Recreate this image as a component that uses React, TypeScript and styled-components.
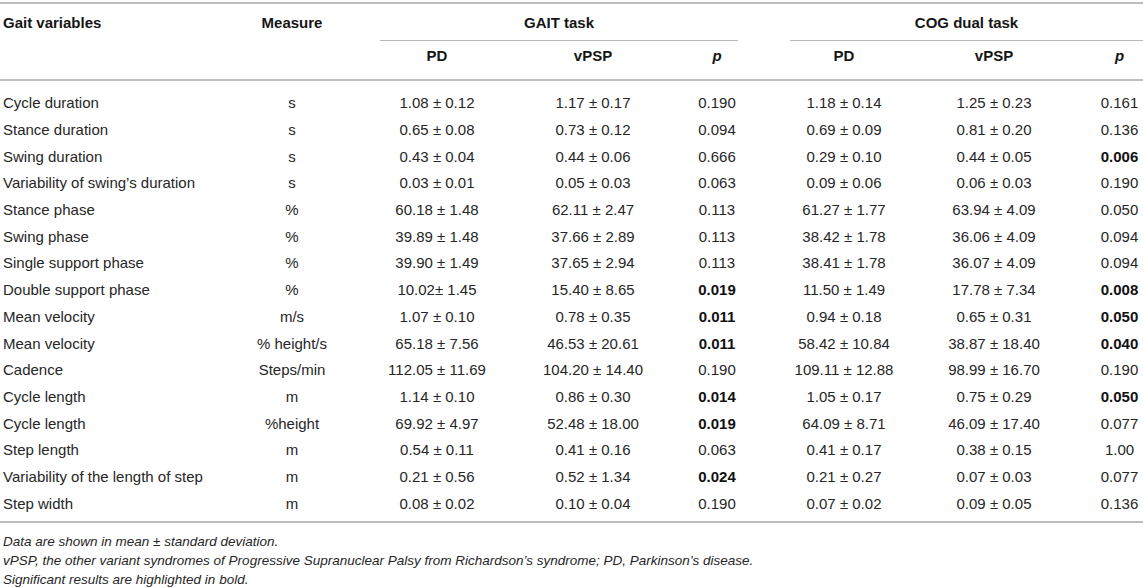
import React from "react";
import styled, { createGlobalStyle } from "styled-components";

const GlobalStyle = createGlobalStyle`
  html, body {
    margin: 0;
    padding: 0;
    background: #ffffff;
  }
  body {
    font-family: "Liberation Sans", Arial, Helvetica, sans-serif;
    color: #262626;
    overflow: hidden;
  }
`;

const COLS = "230px 124px 166px 146px 102px 152px 148px 75px";

const Wrapper = styled.div`
  width: 1143px;
  padding-top: 2px;
`;

const Head = styled.div`
  display: grid;
  grid-template-columns: ${COLS};
  grid-template-rows: 37px 38px;
  border-top: 2px solid #bdbdbd;
  border-bottom: 2px solid #bdbdbd;
  font-weight: 700;
  font-size: 15px;
  line-height: 18px;
  color: #161616;
`;

const HeadCell = styled.div<{ $col: string; $row: string; $align?: string; $pt: number; $pl?: number }>`
  grid-column: ${(p) => p.$col};
  grid-row: ${(p) => p.$row};
  text-align: ${(p) => p.$align || "center"};
  padding-top: ${(p) => p.$pt}px;
  padding-left: ${(p) => p.$pl ?? (p.$align === "left" ? 3 : 0)}px;
`;

const GroupCell = styled.div<{ $col: string; $ml: number; $mr: number }>`
  grid-column: ${(p) => p.$col};
  grid-row: 1;
  text-align: center;
  padding-top: 10px;
  margin-left: ${(p) => p.$ml}px;
  margin-right: ${(p) => p.$mr}px;
  border-bottom: 1px solid #b8b8b8;
`;

const Italic = styled.span`
  font-style: italic;
`;

const Body = styled.div`
  padding-top: 9px;
  padding-bottom: 4px;
  border-bottom: 2px solid #bdbdbd;
`;

const Row = styled.div`
  display: grid;
  grid-template-columns: ${COLS};
  height: 26.7px;
  align-items: center;
  font-size: 15px;
  line-height: 18px;
`;

const Cell = styled.div<{ $align?: string; $pl?: number; $bold?: boolean }>`
  text-align: ${(p) => p.$align || "center"};
  padding-left: ${(p) => p.$pl ?? 0}px;
  font-weight: ${(p) => (p.$bold ? 700 : 400)};
  color: ${(p) => (p.$bold ? "#111" : "#262626")};
  white-space: nowrap;
`;

const Notes = styled.div`
  padding-top: 9px;
  padding-left: 3px;
  font-style: italic;
  font-size: 13.5px;
  line-height: 19px;
  color: #262626;
`;

const Note = styled.div``;

const rows: string[][] = [
  ["Cycle duration", "s", "1.08 ± 0.12", "1.17 ± 0.17", "0.190", "1.18 ± 0.14", "1.25 ± 0.23", "0.161"],
  ["Stance duration", "s", "0.65 ± 0.08", "0.73 ± 0.12", "0.094", "0.69 ± 0.09", "0.81 ± 0.20", "0.136"],
  ["Swing duration", "s", "0.43 ± 0.04", "0.44 ± 0.06", "0.666", "0.29 ± 0.10", "0.44 ± 0.05", "*0.006"],
  ["Variability of swing’s duration", "s", "0.03 ± 0.01", "0.05 ± 0.03", "0.063", "0.09 ± 0.06", "0.06 ± 0.03", "0.190"],
  ["Stance phase", "%", "60.18 ± 1.48", "62.11 ± 2.47", "0.113", "61.27 ± 1.77", "63.94 ± 4.09", "0.050"],
  ["Swing phase", "%", "39.89 ± 1.48", "37.66 ± 2.89", "0.113", "38.42 ± 1.78", "36.06 ± 4.09", "0.094"],
  ["Single support phase", "%", "39.90 ± 1.49", "37.65 ± 2.94", "0.113", "38.41 ± 1.78", "36.07 ± 4.09", "0.094"],
  ["Double support phase", "%", "10.02± 1.45", "15.40 ± 8.65", "*0.019", "11.50 ± 1.49", "17.78 ± 7.34", "*0.008"],
  ["Mean velocity", "m/s", "1.07 ± 0.10", "0.78 ± 0.35", "*0.011", "0.94 ± 0.18", "0.65 ± 0.31", "*0.050"],
  ["Mean velocity", "% height/s", "65.18 ± 7.56", "46.53 ± 20.61", "*0.011", "58.42 ± 10.84", "38.87 ± 18.40", "*0.040"],
  ["Cadence", "Steps/min", "112.05 ± 11.69", "104.20 ± 14.40", "0.190", "109.11 ± 12.88", "98.99 ± 16.70", "0.190"],
  ["Cycle length", "m", "1.14 ± 0.10", "0.86 ± 0.30", "*0.014", "1.05 ± 0.17", "0.75 ± 0.29", "*0.050"],
  ["Cycle length", "%height", "69.92 ± 4.97", "52.48 ± 18.00", "*0.019", "64.09 ± 8.71", "46.09 ± 17.40", "0.077"],
  ["Step length", "m", "0.54 ± 0.11", "0.41 ± 0.16", "0.063", "0.41 ± 0.17", "0.38 ± 0.15", "1.00"],
  ["Variability of the length of step", "m", "0.21 ± 0.56", "0.52 ± 1.34", "*0.024", "0.21 ± 0.27", "0.07 ± 0.03", "0.077"],
  ["Step width", "m", "0.08 ± 0.02", "0.10 ± 0.04", "0.190", "0.07 ± 0.02", "0.09 ± 0.05", "0.136"],
];

const cellLayout = (i: number): { align: string; pl: number } =>
  i === 0 ? { align: "left", pl: 3 } : i === 7 ? { align: "center", pl: 28 } : { align: "center", pl: 0 };

export default function App() {
  return (
    <>
      <GlobalStyle />
      <Wrapper>
        <Head>
          <HeadCell $col="1" $row="1 / 3" $align="left" $pt={10}>Gait variables</HeadCell>
          <HeadCell $col="2" $row="1 / 3" $pt={10}>Measure</HeadCell>
          <GroupCell $col="3 / 6" $ml={26} $mr={30}>GAIT task</GroupCell>
          <GroupCell $col="6 / 9" $ml={22} $mr={0}>COG dual task</GroupCell>
          <HeadCell $col="3" $row="2" $pt={6}>PD</HeadCell>
          <HeadCell $col="4" $row="2" $pt={6}>vPSP</HeadCell>
          <HeadCell $col="5" $row="2" $pt={6}><Italic>p</Italic></HeadCell>
          <HeadCell $col="6" $row="2" $pt={6}>PD</HeadCell>
          <HeadCell $col="7" $row="2" $pt={6}>vPSP</HeadCell>
          <HeadCell $col="8" $row="2" $pt={6} $pl={28}><Italic>p</Italic></HeadCell>
        </Head>
        <Body>
          {rows.map((r, ri) => (
            <Row key={ri}>
              {r.map((v, ci) => {
                const bold = v.startsWith("*");
                const { align, pl } = cellLayout(ci);
                return (
                  <Cell key={ci} $align={align} $pl={pl} $bold={bold}>
                    {bold ? v.slice(1) : v}
                  </Cell>
                );
              })}
            </Row>
          ))}
        </Body>
        <Notes>
          <Note>Data are shown in mean ± standard deviation.</Note>
          <Note>vPSP, the other variant syndromes of Progressive Supranuclear Palsy from Richardson’s syndrome; PD, Parkinson’s disease.</Note>
          <Note>Significant results are highlighted in bold.</Note>
        </Notes>
      </Wrapper>
    </>
  );
}
